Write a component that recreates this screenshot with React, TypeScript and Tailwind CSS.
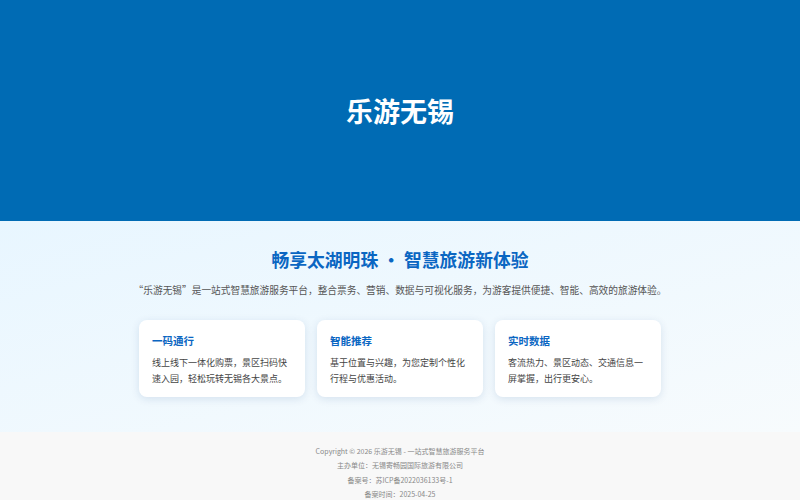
const features = [
  {
    title: "一码通行",
    text: "线上线下一体化购票，景区扫码快速入园，轻松玩转无锡各大景点。",
  },
  {
    title: "智能推荐",
    text: "基于位置与兴趣，为您定制个性化行程与优惠活动。",
  },
  {
    title: "实时数据",
    text: "客流热力、景区动态、交通信息一屏掌握，出行更安心。",
  },
];

const FeatureCard = ({ title, text }: { title: string; text: string }) => {
  return (
    <div className="h-[77px] w-[166px] rounded-lg bg-white px-[13px] pt-[13px] shadow-[0_2px_8px_rgba(0,60,120,0.12)]">
      <h3 className="text-[10.5px] font-bold leading-[16px] text-[#0a66c2]">{title}</h3>
      <p className="mt-[6px] text-[9px] leading-[16px] text-[#444]">{text}</p>
    </div>
  );
};

export default function App() {
  return (
    <div className="min-h-screen font-['Noto_Sans_CJK_SC','Noto_Sans',sans-serif]">
      <header className="flex h-[221px] items-center justify-center bg-[#006bb4] shadow-[0_1px_3px_rgba(0,0,0,0.2)]">
        <h1 className="text-[27px] font-bold leading-none text-white">乐游无锡</h1>
      </header>

      <section className="flex h-[211px] flex-col items-center bg-gradient-to-br from-[#e8f6ff] to-[#f7fbfd] pt-[25px]">
        <h2 className="text-[17.8px] font-bold leading-[26px] text-[#0a66c2]">
          畅享太湖明珠 · 智慧旅游新体验
        </h2>
        <p className="mt-[10px] text-[9.7px] leading-[16px] text-[#555]">
          “乐游无锡”是一站式智慧旅游服务平台，整合票务、营销、数据与可视化服务，为游客提供便捷、智能、高效的旅游体验。
        </p>
        <div className="mt-[22px] flex gap-[12px]">
          {features.map((f) => (
            <FeatureCard key={f.title} title={f.title} text={f.text} />
          ))}
        </div>
      </section>

      <footer className="flex flex-col items-center bg-[#f8f8f8] pt-[12px] pb-[10px] text-[7px] leading-[14.3px] text-[#888]">
        <p>Copyright © 2026 乐游无锡 - 一站式智慧旅游服务平台</p>
        <p>主办单位：无锡寄畅园国际旅游有限公司</p>
        <p>备案号：苏ICP备2022036133号-1</p>
        <p>备案时间：2025-04-25</p>
      </footer>
    </div>
  );
}
